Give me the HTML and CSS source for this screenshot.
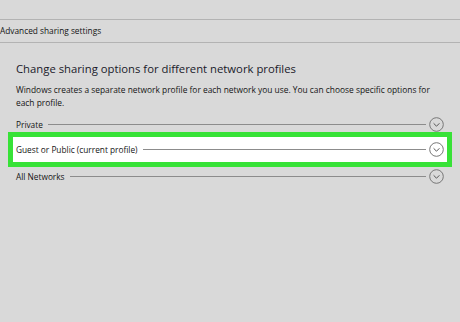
FILE: index.html
```html
<!DOCTYPE html>
<html>
<head>
<meta charset="utf-8">
<link rel="stylesheet" href="styles.css">
</head>
<body>
<div class="page">
  <div class="crumb">Advanced sharing settings</div>
  <div class="content">
    <h1 class="title">Change sharing options for different network profiles</h1>
    <p class="desc">Windows creates a separate network profile for each network you use. You can choose specific options for each profile.</p>
    <div class="row first">
      <span class="label">Private</span>
      <span class="rule"></span>
      <svg class="chev" width="15" height="15" viewBox="0 0 15 15"><circle cx="7.5" cy="7.5" r="6.8" fill="none" stroke="#777" stroke-width="1"/><path d="M4.6 6.3 L7.5 9.2 L10.4 6.3" fill="none" stroke="#555" stroke-width="1"/></svg>
    </div>
    <div class="row highlight">
      <span class="label">Guest or Public (current profile)</span>
      <span class="rule"></span>
      <svg class="chev" width="15" height="15" viewBox="0 0 15 15"><circle cx="7.5" cy="7.5" r="6.8" fill="none" stroke="#777" stroke-width="1"/><path d="M4.6 6.3 L7.5 9.2 L10.4 6.3" fill="none" stroke="#555" stroke-width="1"/></svg>
    </div>
    <div class="row last">
      <span class="label">All Networks</span>
      <span class="rule"></span>
      <svg class="chev" width="15" height="15" viewBox="0 0 15 15"><circle cx="7.5" cy="7.5" r="6.8" fill="none" stroke="#777" stroke-width="1"/><path d="M4.6 6.3 L7.5 9.2 L10.4 6.3" fill="none" stroke="#555" stroke-width="1"/></svg>
    </div>
  </div>
</div>
</body>
</html>
```
FILE: styles.css
```css
html, body {
  margin: 0;
  padding: 0;
  background: #d9d9d9;
}
body {
  font-family: "Open Sans", "Noto Sans", sans-serif;
  color: #141414;
  width: 460px;
  height: 322px;
  overflow: hidden;
}
.page {
  padding-top: 19px;
}
.crumb {
  border-top: 1px solid #b3b3b3;
  border-bottom: 1px solid #b3b3b3;
  height: 22px;
  line-height: 22px;
  font-size: 8.3px;
  padding-left: 0;
}
.content {
  padding: 18px 16px 0 16px;
}
.title {
  margin: 0;
  font-weight: normal;
  font-size: 11.3px;
  line-height: 16px;
  color: #1a1a2a;
}
.desc {
  margin: 6px 0 0 0;
  font-size: 8.4px;
  line-height: 13px;
}
.row {
  display: flex;
  align-items: center;
  height: 16px;
  font-size: 8.3px;
}
.row.first {
  margin-top: 7px;
}
.row.last {
  margin-top: 1px;
}
.label {
  white-space: nowrap;
}
.rule {
  flex: 1;
  height: 1px;
  background: #8c8c8c;
  margin: 0 3px 0 5px;
}
.chev {
  flex: none;
}
.highlight {
  margin: 0 -8px;
  border: 5px solid #37e237;
  background: #ffffff;
  padding: 0 3px;
  height: 25px;
}
```
